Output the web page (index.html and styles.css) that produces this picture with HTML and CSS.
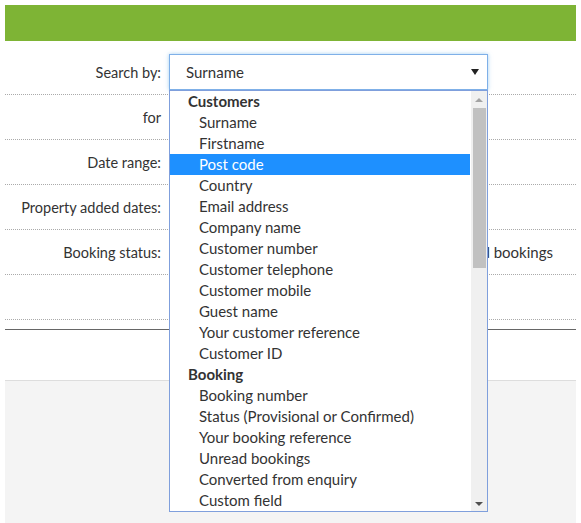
FILE: index.html
```html
<!DOCTYPE html>
<html>
<head>
  <meta charset="utf-8">
  <title>Search bookings</title>
  <link rel="stylesheet" href="styles.css">
</head>
<body>
  <div class="topbar"></div>

  <div class="search-form">
    <div class="row">
      <div class="label">Search by:</div>
      <div class="value">
        <div class="select-wrap">
          <div class="select">
            <span>Surname</span>
            <span class="arrow"></span>
          </div>

          <div class="dropdown">
            <div class="options">
              <div class="group">Customers</div>
              <div class="option">Surname</div>
              <div class="option">Firstname</div>
              <div class="option selected">Post code</div>
              <div class="option">Country</div>
              <div class="option">Email address</div>
              <div class="option">Company name</div>
              <div class="option">Customer number</div>
              <div class="option">Customer telephone</div>
              <div class="option">Customer mobile</div>
              <div class="option">Guest name</div>
              <div class="option">Your customer reference</div>
              <div class="option">Customer ID</div>
              <div class="group">Booking</div>
              <div class="option">Booking number</div>
              <div class="option">Status (Provisional or Confirmed)</div>
              <div class="option">Your booking reference</div>
              <div class="option">Unread bookings</div>
              <div class="option">Converted from enquiry</div>
              <div class="option">Custom field</div>
            </div>
            <div class="scrollbar">
              <span class="scroll-up"></span>
              <span class="thumb"></span>
              <span class="scroll-down"></span>
            </div>
          </div>
        </div>
      </div>
    </div>

    <div class="row">
      <div class="label">for</div>
      <div class="value"></div>
    </div>

    <div class="row">
      <div class="label">Date range:</div>
      <div class="value"></div>
    </div>

    <div class="row">
      <div class="label">Property added dates:</div>
      <div class="value"></div>
    </div>

    <div class="row">
      <div class="label">Booking status:</div>
      <div class="value status">Include cancelled bookings</div>
    </div>

    <div class="row">
      <div class="label"></div>
      <div class="value"></div>
    </div>
  </div>

  <div class="actions"></div>
  <div class="results"></div>
</body>
</html>
```

FILE: styles.css
```css
html, body {
  overflow: hidden;
}

body {
  margin: 5px 5px 0;
  font-family: Lato, 'Liberation Sans', Arial, sans-serif;
  font-size: 14.5px;
  color: #333;
  background: #fff;
}

.topbar {
  height: 36px;
  background: #7eb435;
}

.search-form {
  padding-top: 9px;
  border-bottom: 1px solid #666;
}

.row {
  display: grid;
  grid-template-columns: 156px 1fr;
  column-gap: 8px;
  align-items: center;
  height: 44px;
  border-bottom: 1px dotted #aaa;
}

.row:last-child {
  margin-bottom: 9px;
}

.label {
  text-align: right;
}

.value {
  position: relative;
  height: 100%;
  display: flex;
  align-items: center;
}

.value.status {
  justify-content: flex-end;
  padding-right: 23px;
  font-size: 15px;
}

.select-wrap {
  position: relative;
  width: 319px;
}

.select {
  height: 34px;
  display: flex;
  align-items: center;
  justify-content: space-between;
  padding: 0 8px 0 16px;
  border: 1px solid #7fb0e8;
  box-shadow: 0 0 4px rgba(102, 175, 233, 0.6);
  background: #fff;
  font-size: 15px;
}

.arrow {
  width: 0;
  height: 0;
  border-left: 4px solid transparent;
  border-right: 4px solid transparent;
  border-top: 6px solid #222;
}

.dropdown {
  position: absolute;
  top: 36px;
  left: 0;
  z-index: 10;
  width: 317px;
  display: flex;
  background: #fff;
  border: 1px solid #7f9fdc;
  font-size: 15px;
}

.options {
  flex: 1;
}

.group,
.option {
  height: 21px;
  line-height: 21px;
  white-space: nowrap;
}

.group {
  padding-left: 18px;
  font-weight: bold;
}

.option {
  padding-left: 29px;
}

.option.selected {
  background: #1e90ff;
  color: #fff;
}

.scrollbar {
  width: 16px;
  margin-left: 1px;
  background: #f0f0f0;
  display: flex;
  flex-direction: column;
  align-items: center;
}

.scroll-up,
.scroll-down {
  width: 0;
  height: 0;
  border-left: 4px solid transparent;
  border-right: 4px solid transparent;
}

.scroll-up {
  margin: 7px 0 6px;
  border-bottom: 4px solid #a3a3a3;
}

.scroll-down {
  margin: auto 0 5px;
  border-top: 4px solid #505050;
}

.thumb {
  width: 13px;
  margin-left: 1px;
  height: 160px;
  background: #c1c1c1;
}

.actions {
  height: 50px;
  border-bottom: 1px solid #ddd;
}

.results {
  height: 142px;
  background: #f4f4f4;
}
```
